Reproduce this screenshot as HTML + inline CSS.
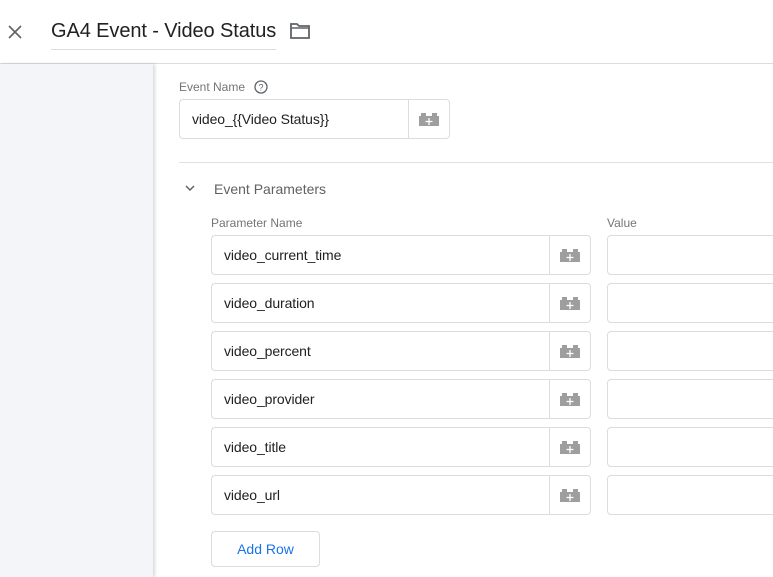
<!DOCTYPE html>
<html><head><style>
body{margin:0;width:773px;height:577px;overflow:hidden;background:#fff;font-family:"Liberation Sans",sans-serif;position:relative}
.a{position:absolute}
.hdr{left:0;top:0;width:773px;height:63px;border-bottom:1px solid #dadce0;background:#fff}
.side{left:0;top:64px;width:153px;height:513px;background:#f3f5f8;box-shadow:2px 0 3px rgba(0,0,0,.15)}
.box{position:absolute;border:1px solid #dadce0;border-radius:4px;box-sizing:border-box;background:#fff}
.in{font-size:14px;color:#212121;position:absolute;left:12px;top:11px;letter-spacing:-0.1px}
.btn{position:absolute;right:0;top:0;bottom:0;width:40px;border-left:1px solid #dadce0}
.btn svg{position:absolute;left:9px;top:11px}
.lbl{font-size:12px;color:#757575}
</style></head><body>
<div class="a hdr"></div>
<svg class="a" style="left:7px;top:24px" width="16" height="16" viewBox="0 0 16 16"><path d="M2 2L14 14M14 2L2 14" stroke="#5f6368" stroke-width="1.6"/></svg>
<div class="a" style="left:51px;top:20px;font-size:20px;color:#212121;letter-spacing:-0.1px">GA4 Event - Video Status</div>
<div class="a" style="left:51px;top:49px;width:225px;height:1px;background:#dadce0"></div>
<svg class="a" style="left:289px;top:22px" width="22" height="18" viewBox="0 0 22 18"><path d="M2 2h6l2 2h10v12H2z" fill="none" stroke="#5f6368" stroke-width="1.8"/><path d="M2 6h18" stroke="#5f6368" stroke-width="1.4"/></svg>
<div class="a side"></div>
<div class="a lbl" style="left:179px;top:80px">Event Name</div>
<svg class="a" style="left:254px;top:80px" width="14" height="14" viewBox="0 0 14 14"><circle cx="7" cy="7" r="6" fill="none" stroke="#5f6368" stroke-width="1.3"/><text x="7" y="10.5" font-size="9" text-anchor="middle" fill="#5f6368" font-family="Liberation Sans">?</text></svg>
<div class="box" style="left:179px;top:99px;width:271px;height:40px"><span class="in">video_{{Video Status}}</span><div class="btn"><svg width="22" height="16" viewBox="0 0 22 16"><rect x="1" y="5" width="20" height="10" fill="#9e9e9e"/><rect x="3" y="2" width="5" height="3" fill="#9e9e9e"/><rect x="14" y="2" width="5" height="3" fill="#9e9e9e"/><path d="M11 7v7M7.5 10.5h7" stroke="#fff" stroke-width="1.3"/></svg></div></div>
<div class="a" style="left:179px;top:162px;width:594px;height:1px;background:#e0e0e0"></div>
<svg class="a" style="left:184px;top:183px" width="12" height="10" viewBox="0 0 12 10"><path d="M2 3l4 4 4-4" fill="none" stroke="#5f6368" stroke-width="1.5"/></svg>
<div class="a" style="left:214px;top:181px;font-size:14px;color:#616161">Event Parameters</div>
<div class="a lbl" style="left:211px;top:216px">Parameter Name</div>
<div class="a lbl" style="left:607px;top:216px">Value</div>
<div id="rows"></div>
<script>
var n=["video_current_time","video_duration","video_percent","video_provider","video_title","video_url"],h="";
var ic='<svg width="22" height="16" viewBox="0 0 22 16"><rect x="1" y="5" width="20" height="10" fill="#9e9e9e"/><rect x="3" y="2" width="5" height="3" fill="#9e9e9e"/><rect x="14" y="2" width="5" height="3" fill="#9e9e9e"/><path d="M11 7v7M7.5 10.5h7" stroke="#fff" stroke-width="1.3"/></svg>';
n.forEach(function(t,i){var y=235+i*48;h+='<div class="box" style="left:211px;top:'+y+'px;width:380px;height:40px"><span class="in">'+t+'</span><div class="btn">'+ic+'</div></div><div class="box" style="left:607px;top:'+y+'px;width:180px;height:40px"></div>';});
document.getElementById('rows').innerHTML=h;
</script>
<div class="box" style="left:211px;top:531px;width:109px;height:36px;text-align:center;line-height:34px;font-size:14px;color:#1a73e8">Add Row</div>
</body></html>
